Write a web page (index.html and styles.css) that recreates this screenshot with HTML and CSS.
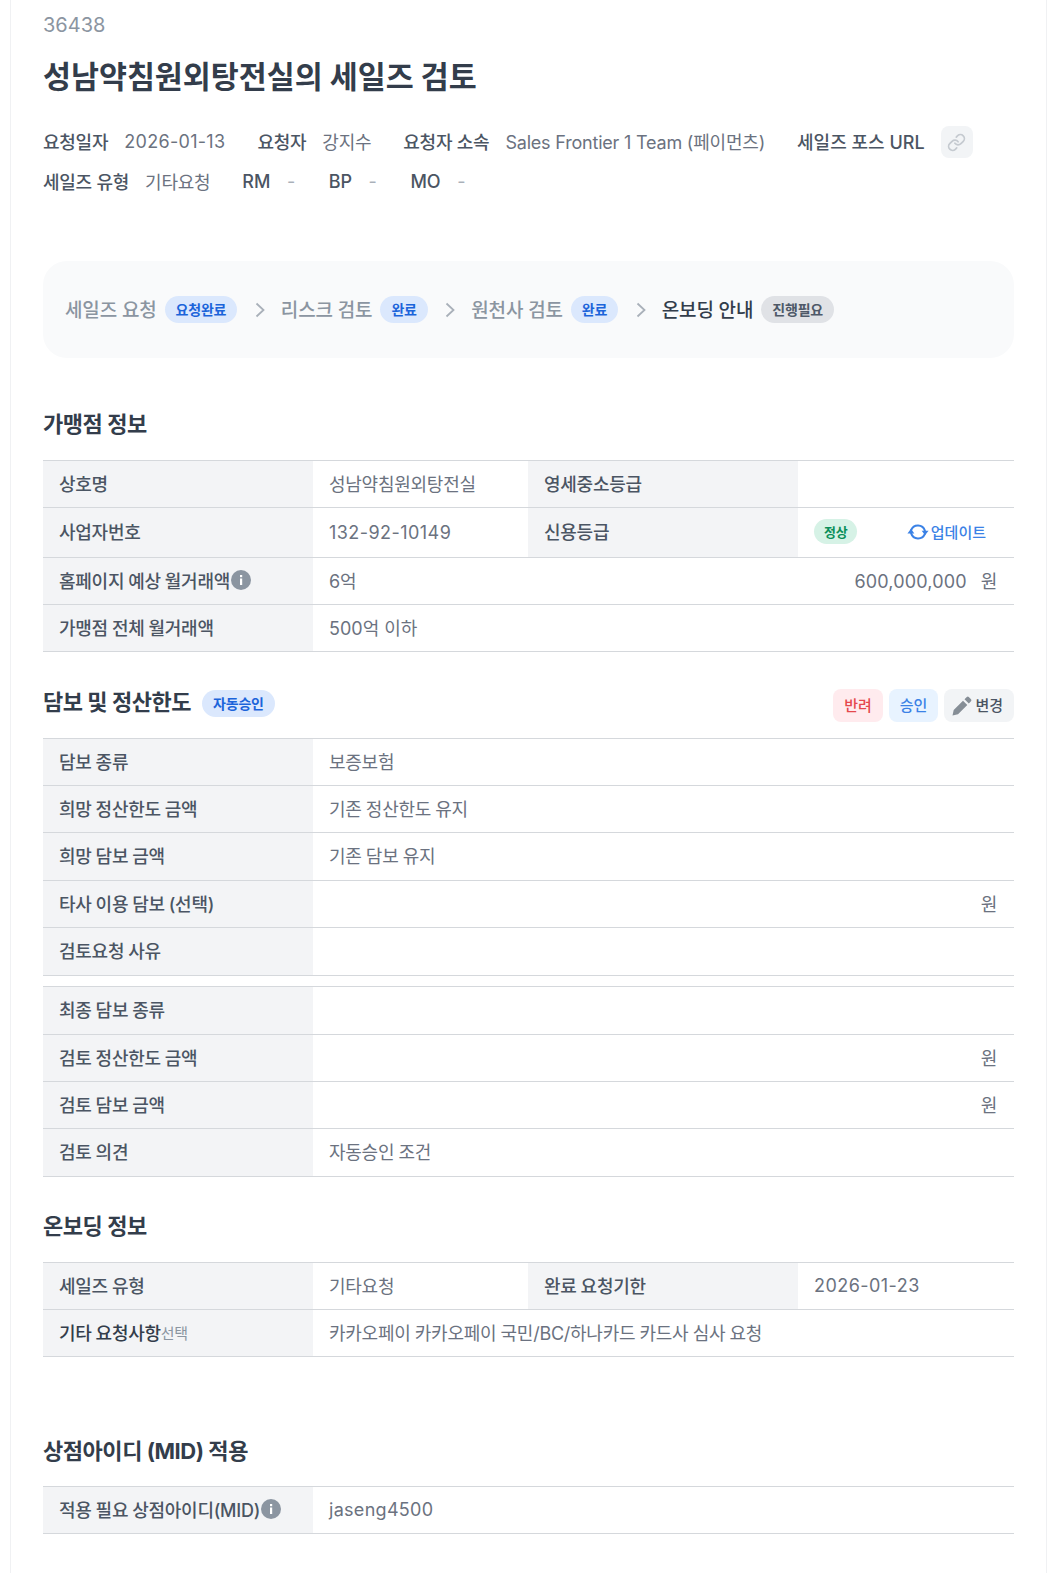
FILE: index.html
```html
<!DOCTYPE html>
<html lang="ko">
<head>
<meta charset="utf-8">
<title>세일즈 검토</title>
<link rel="stylesheet" href="styles.css">
</head>
<body>
<main class="page">
  <div class="req-id">36438</div>
  <h1 class="title">성남약침원외탕전실의 세일즈 검토</h1>
  <div class="meta">
    <div class="meta-row">
      <span class="meta-item"><b>요청일자</b><span class="date">2026-01-13</span></span>
      <span class="meta-item"><b>요청자</b><span>강지수</span></span>
      <span class="meta-item"><b>요청자 소속</b><span class="team">Sales Frontier 1 Team (페이먼츠)</span></span>
      <span class="meta-item url-item"><b class="plain">세일즈 포스 URL</b>
        <span class="link-btn"><svg viewBox="0 0 24 24" width="19" height="19" fill="none" stroke="#c5cad0" stroke-width="2.200" stroke-linecap="round" stroke-linejoin="round"><path d="M10 13a5 5 0 0 0 7.54.54l3-3a5 5 0 0 0-7.07-7.07l-1.72 1.71"/><path d="M14 11a5 5 0 0 0-7.54-.54l-3 3a5 5 0 0 0 7.07 7.07l1.71-1.71"/></svg></span>
      </span>
    </div>
    <div class="meta-row">
      <span class="meta-item"><b>세일즈 유형</b><span>기타요청</span></span>
      <span class="meta-item"><b class="plain">RM</b><span class="dash">-</span></span>
      <span class="meta-item"><b class="plain">BP</b><span class="dash">-</span></span>
      <span class="meta-item"><b class="plain">MO</b><span class="dash">-</span></span>
    </div>
  </div>

  <div class="stepper">
    <span class="step">세일즈 요청</span><span class="badge blue">요청완료</span>
    <svg class="chev" viewBox="0 0 10 16" width="10" height="16" fill="none" stroke="#a9b0b9" stroke-width="1.800"><path d="M1.500 1.500 8.500 8l-7 6.500"/></svg>
    <span class="step">리스크 검토</span><span class="badge blue">완료</span>
    <svg class="chev" viewBox="0 0 10 16" width="10" height="16" fill="none" stroke="#a9b0b9" stroke-width="1.800"><path d="M1.500 1.500 8.500 8l-7 6.500"/></svg>
    <span class="step">원천사 검토</span><span class="badge blue">완료</span>
    <svg class="chev" viewBox="0 0 10 16" width="10" height="16" fill="none" stroke="#a9b0b9" stroke-width="1.800"><path d="M1.500 1.500 8.500 8l-7 6.500"/></svg>
    <span class="step current">온보딩 안내</span><span class="badge gray">진행필요</span>
  </div>

  <h2 class="heading h-merchant">가맹점 정보</h2>
  <div class="table">
    <div class="row r47">
      <div class="th">상호명</div><div class="td half">성남약침원외탕전실</div>
      <div class="th">영세중소등급</div><div class="td"></div>
    </div>
    <div class="row r50">
      <div class="th">사업자번호</div><div class="td half num wide">132-92-10149</div>
      <div class="th">신용등급</div>
      <div class="td credit">
        <span class="pill-ok">정상</span>
        <span class="update"><svg viewBox="0 0 24 24" width="22" height="22" fill="none" stroke="#3b82e6" stroke-width="2.200" stroke-linecap="round"><path d="M4.500 10A8 8 0 0 1 19.500 10.500"/><path d="M19.500 14A8 8 0 0 1 4.500 13.500"/><path d="M16 10.500H23.500L19.700 15.500Z" fill="#3b82e6" stroke="none"/><path d="M.5 13.500H8L4.300 8.500Z" fill="#3b82e6" stroke="none"/></svg>업데이트</span>
      </div>
    </div>
    <div class="row r47">
      <div class="th">홈페이지 예상 월거래액<svg class="info" viewBox="0 0 20 20" width="20" height="20"><circle cx="10" cy="10" r="10" fill="#8b95a1"/><rect x="9" y="8.500" width="2.200" height="6.500" fill="#fff"/><rect x="9" y="5" width="2.200" height="2.200" fill="#fff"/></svg></div>
      <div class="td amount"><span>6억</span><span class="amt"><span class="figure">600,000,000</span><i>원</i></span></div>
    </div>
    <div class="row r47"><div class="th">가맹점 전체 월거래액</div><div class="td plain">500억 이하</div></div>
  </div>

  <div class="heading-bar">
    <h2 class="heading">담보 및 정산한도</h2><span class="badge blue auto">자동승인</span>
    <div class="actions">
      <button class="act red" type="button">반려</button>
      <button class="act sky" type="button">승인</button>
      <button class="act grey" type="button"><svg class="pencil" viewBox="0 0 20 20" width="20" height="20"><path d="M.5 19.500 1.700 14 11 4.700 15.300 9 6 18.300Z M12.500 3.200 14.800 1a1.500 1.500 0 0 1 2 0L19 3.200a1.500 1.500 0 0 1 0 2L16.800 7.500Z" fill="#868e96"/></svg>변경</button>
    </div>
  </div>
  <div class="table">
    <div class="row r47"><div class="th">담보 종류</div><div class="td">보증보험</div></div>
    <div class="row r47"><div class="th">희망 정산한도 금액</div><div class="td">기존 정산한도 유지</div></div>
    <div class="row r48"><div class="th">희망 담보 금액</div><div class="td">기존 담보 유지</div></div>
    <div class="row r47"><div class="th">타사 이용 담보 (선택)</div><div class="td won">원</div></div>
    <div class="row r48"><div class="th">검토요청 사유</div><div class="td"></div></div>
  </div>
  <div class="table second">
    <div class="row r48"><div class="th">최종 담보 종류</div><div class="td"></div></div>
    <div class="row r47"><div class="th">검토 정산한도 금액</div><div class="td won">원</div></div>
    <div class="row r47"><div class="th">검토 담보 금액</div><div class="td won">원</div></div>
    <div class="row r48"><div class="th">검토 의견</div><div class="td">자동승인 조건</div></div>
  </div>

  <h2 class="heading h-onboard">온보딩 정보</h2>
  <div class="table">
    <div class="row r47">
      <div class="th">세일즈 유형</div><div class="td half">기타요청</div>
      <div class="th">완료 요청기한</div><div class="td num wide">2026-01-23</div>
    </div>
    <div class="row r47"><div class="th strong">기타 요청사항<small>선택</small></div><div class="td">카카오페이 카카오페이 국민/BC/하나카드 카드사 심사 요청</div></div>
  </div>

  <h2 class="heading h-mid">상점아이디 (MID) 적용</h2>
  <div class="table">
    <div class="row r47"><div class="th">적용 필요 상점아이디(MID)<svg class="info" viewBox="0 0 20 20" width="20" height="20"><circle cx="10" cy="10" r="10" fill="#8b95a1"/><rect x="9" y="8.500" width="2.200" height="6.500" fill="#fff"/><rect x="9" y="5" width="2.200" height="2.200" fill="#fff"/></svg></div><div class="td num">jaseng4500</div></div>
  </div>
</main>
</body>
</html>
```

FILE: styles.css
```css
* { box-sizing: border-box; }
html, body { margin: 0; padding: 0; height: 1573px; overflow: hidden; background: #fff; }
body {
  font-family: Inter, "Noto Sans CJK KR", "Noto Sans", sans-serif;
  font-size: 18px;
  letter-spacing: -0.25px;
  word-spacing: -0.6px;
  color: #4e5968;
}
.page {
  width: 1037px;
  height: 1573px;
  margin-left: 10px;
  padding: 13px 32px 0;
  border-left: 1px solid #f0f1f3;
  border-right: 1px solid #f0f1f3;
}
.plain { letter-spacing: 0; word-spacing: 0; }
.req-id { font-size: 20px; line-height: 24px; letter-spacing: 0; color: #8b95a1; }
.title { margin: 18px 0 0; font-size: 30.4px; line-height: 44px; font-weight: 700; letter-spacing: 0; word-spacing: 0; color: #333d4b; }
.meta { margin-top: 27px; display: flex; flex-direction: column; gap: 8px; word-spacing: 0; }
.meta-row { display: flex; align-items: center; gap: 32px; height: 32px; }
.meta-item { display: flex; align-items: center; gap: 16px; padding-bottom: 2px; color: #6b7280; }
.meta-item b { font-weight: 500; color: #4b5563; }
.date { letter-spacing: 0.3px; }
.team { letter-spacing: -0.2px; }
.dash { color: #a9b0b9; letter-spacing: 0; padding-left: 0.5px; padding-right: 1.5px; }
.url-item { gap: 16px; }
.link-btn {
  display: flex; align-items: center; justify-content: center;
  width: 32px; height: 32px; margin-bottom: -2px; border-radius: 8px; background: #f2f4f6;
}
.stepper {
  margin-top: 63px;
  height: 97px;
  padding: 0 22px;
  display: flex;
  align-items: center;
  background: #f9fafb;
  border-radius: 24px;
  word-spacing: 0;
}
.step { font-size: 19px; letter-spacing: -0.15px; color: #8b95a1; margin-right: 8px; padding-bottom: 2px; font-weight: 500; }
.step.current { color: #333d4b; }
.chev { margin: 0 16px 0 17.5px; }
.badge {
  display: inline-flex; align-items: center; height: 27px; padding: 0 11px 2px;
  border-radius: 14px; font-size: 14px; font-weight: 600; letter-spacing: -0.2px;
}
.blue { background: #dbe8fd; color: #1b64da; }
.gray { background: #e0e2e6; color: #4e5968; }
.heading { margin: 0; font-size: 22px; line-height: 32px; font-weight: 700; letter-spacing: -0.45px; word-spacing: 0; color: #333d4b; }
.h-merchant { margin-top: 50px; margin-bottom: 20px; }
.table { border-top: 1px solid #d5d8dc; }
.row { display: flex; border-bottom: 1px solid #d5d8dc; }
.r47 { height: 47px; }
.r48 { height: 48px; }
.r50 { height: 50px; }
.th {
  flex: 0 0 270px; display: flex; align-items: center; padding: 0 0 2px 16px;
  background: #f3f4f6; font-weight: 500; color: #4b5563;
}
.r48 .th { padding-bottom: 3px; }
.r50 .th { padding-bottom: 3px; }
.th.strong { color: #333d4b; }
.th small { font-size: 15px; font-weight: 400; color: #8b95a1; }
.info { flex: none; margin-left: 0.5px; }
.td {
  flex: 1; min-width: 0; display: flex; align-items: center; padding: 0 16px 2px;
  color: #6b7280;
}
.r48 .td { padding-bottom: 3px; }
.td.half { flex: 0 0 215px; }
.td.num { letter-spacing: 0.3px; padding-bottom: 1px; }
.td.wide { letter-spacing: 0.45px; }
.td.amount { justify-content: space-between; padding-right: 17px; }
.figure { letter-spacing: 0.15px; }
.amt i { font-style: normal; margin-left: 14px; }
.td.won { justify-content: flex-end; padding-right: 17px; }
.td.credit { justify-content: space-between; padding-right: 28px; }
.pill-ok {
  display: inline-flex; align-items: center; height: 25px; padding: 0 10px 1px;
  border-radius: 13px; background: #d6f2e6; color: #0a8f5a; font-size: 13px; font-weight: 600;
}
.update { display: inline-flex; align-items: center; gap: 2px; color: #3b82e6; font-size: 15px; font-weight: 500; letter-spacing: 0; }
.heading-bar { margin-top: 34px; margin-bottom: 15px; display: flex; align-items: flex-start; gap: 11px; height: 37px; }
.auto { margin-top: 4px; }
.actions { margin-left: auto; margin-top: 3px; display: flex; gap: 6px; }
.act {
  height: 33px; padding: 0 11px 2px; border: 0; border-radius: 8px; font: inherit; font-size: 15px;
  letter-spacing: 0; font-weight: 500; display: inline-flex; align-items: center; gap: 3px;
}
.pencil { margin-top: 2px; }
.red { background: #ffebee; color: #e5484d; }
.sky { background: #e8f3ff; color: #3b82e6; }
.grey { background: #f2f4f6; color: #4b5563; padding-left: 8px; }
.second { margin-top: 10px; }
.h-onboard { margin-top: 33px; margin-bottom: 20px; }
.h-mid { margin-top: 78px; margin-bottom: 19px; }
```
